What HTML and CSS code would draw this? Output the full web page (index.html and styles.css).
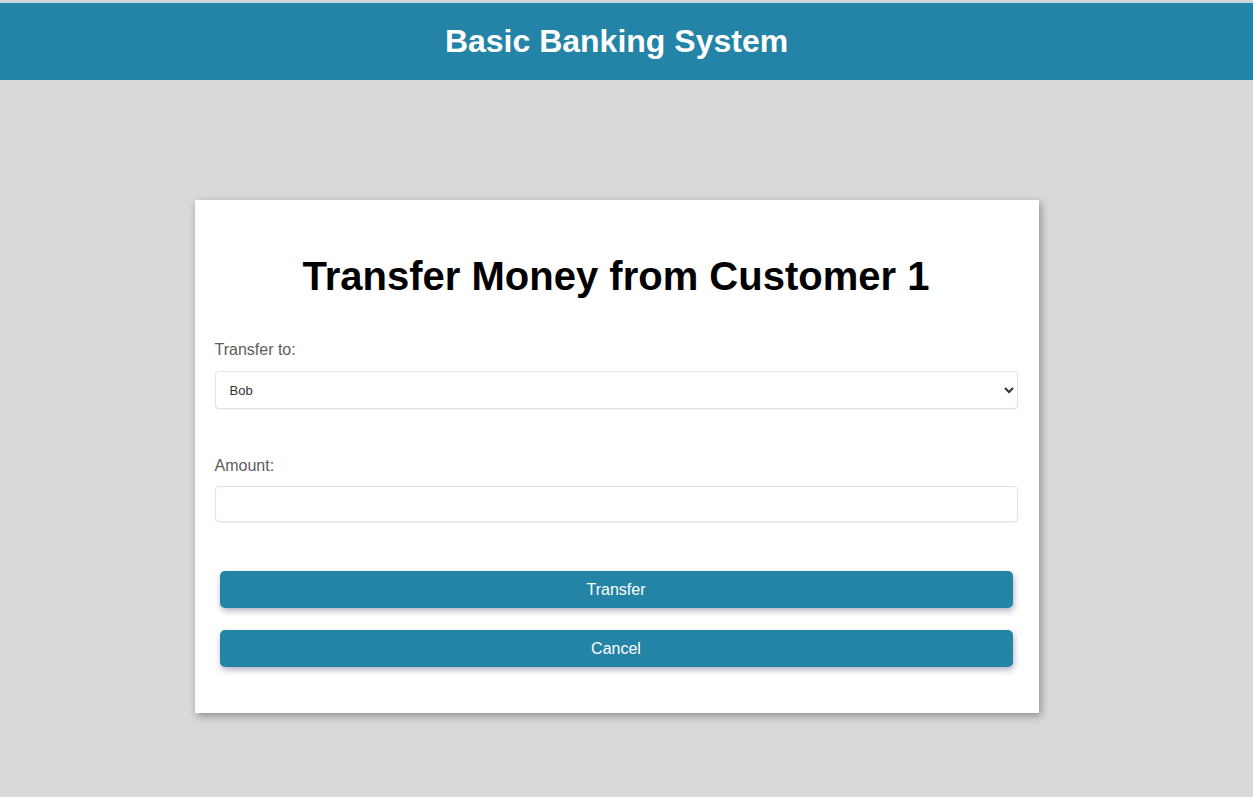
FILE: index.html
```html
<!DOCTYPE html>
<html lang="en">
<head>
<meta charset="utf-8">
<title>Basic Banking System</title>
<link rel="stylesheet" href="styles.css">
</head>
<body>
<header class="topbar">
  <h1 class="brand">Basic Banking System</h1>
</header>
<main class="page">
  <section class="card">
    <h2 class="title">Transfer Money from Customer 1</h2>
    <form class="form">
      <label class="label" for="to">Transfer to:</label>
      <div class="select-wrap">
        <select id="to" class="select">
          <option>Bob</option>
        </select>
      </div>
      <label class="label label-amount" for="amount">Amount:</label>
      <input id="amount" class="input" type="text">
      <div class="actions">
        <button type="button" class="btn">Transfer</button>
        <button type="button" class="btn">Cancel</button>
      </div>
    </form>
  </section>
</main>
</body>
</html>
```
FILE: styles.css
```css
* { box-sizing: border-box; }
html, body { margin: 0; padding: 0; }
body {
  background: #d9d9d9;
  font-family: "Liberation Sans", Arial, sans-serif;
  height: 797px;
  overflow: hidden;
}
.topbar {
  border-top: 3px solid #cfd4d6;
  background: #2384a7;
  height: 80px;
  display: flex;
  align-items: center;
  justify-content: center;
  padding-right: 20px;
}
.brand {
  margin: 0;
  color: #fff;
  font-size: 32px;
  font-weight: bold;
  padding-top: 0;
}
.page {
  display: flex;
  justify-content: center;
  padding-top: 120px;
  padding-right: 20px;
}
.card {
  width: 844px;
  background: #fff;
  padding: 20px 21px 46px 20px;
  box-shadow: 2px 3px 8px rgba(0,0,0,0.35);
}
.title {
  margin: 33px 0 0;
  text-align: center;
  font-size: 40px;
  font-weight: bold;
  color: #000;
  line-height: 46px;
}
.form {
  display: flex;
  flex-direction: column;
  margin-top: 42px;
}
.label {
  font-size: 16px;
  color: #5c5c5c;
  line-height: 18px;
}
.label-amount { margin-top: 48px; }
.select-wrap { margin-top: 12px; }
.select {
  width: 100%;
  height: 38px;
  border: 1px solid #e2e2e2;
  border-radius: 4px;
  background: #fff;
  font-family: "Liberation Sans", Arial, sans-serif;
  font-size: 13px;
  color: #333;
  padding: 0 10px;
  box-shadow: 0 1px 2px rgba(0,0,0,0.06);
}
.input {
  margin-top: 11px;
  width: 100%;
  height: 36px;
  border: 1px solid #e2e2e2;
  border-radius: 4px;
  background: #fff;
  box-shadow: 0 1px 2px rgba(0,0,0,0.06);
}
.actions {
  display: flex;
  flex-direction: column;
  gap: 22px;
  margin-top: 49px;
  padding: 0 5px;
}
.btn {
  height: 37px;
  border: none;
  border-radius: 5px;
  background: #2484a6;
  color: #fff;
  font-family: "Liberation Sans", Arial, sans-serif;
  font-size: 16px;
  box-shadow: 1px 3px 6px rgba(40,40,80,0.35);
  cursor: pointer;
}
```
